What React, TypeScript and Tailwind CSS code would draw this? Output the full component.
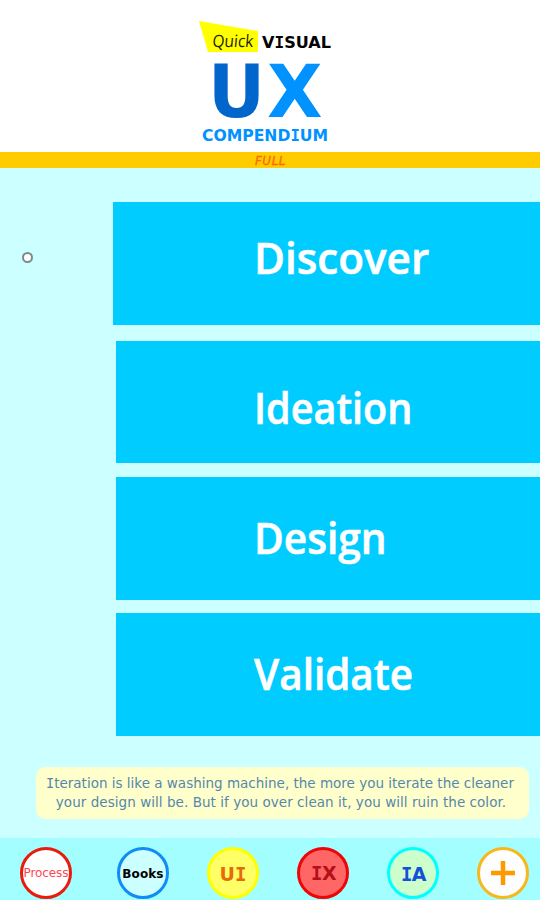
import { ReactNode } from 'react';
import clsx from 'clsx';

interface Stage {
  name: string;
  box: string;
  label: string;
}

const stages: Stage[] = [
  { name: 'Discover', box: 'ml-[112.5px] h-[123px] pl-[141.5px] pt-[25px]', label: 'text-[44px] scale-x-[0.96]' },
  { name: 'Ideation', box: 'ml-[116px] mt-[16px] h-[122px] pl-[138px] pt-[37px]', label: 'text-[43px] scale-x-[0.92]' },
  { name: 'Design', box: 'ml-[116px] mt-[14px] h-[123px] pl-[138px] pt-[31px]', label: 'text-[43px] scale-x-[0.945]' },
  { name: 'Validate', box: 'ml-[116px] mt-[13px] h-[123px] pl-[138px] pt-[31px]', label: 'text-[43px] scale-x-[0.94]' },
];

// Capital I with slabs, the sans face has a plain bar
const SlabI = () => <span className="font-['DejaVu_Sans_Mono',monospace]">I</span>;

const Logo = () => (
  <svg width="150" height="140" viewBox="190 10 150 140" className="font-['DejaVu_Sans',sans-serif]">
    <polygon points="199,21 258,31 258,52 208,52" fill="#ffff00" />
    <text transform="translate(212 47) skewX(-5)" fontSize="17" textLength="41" lengthAdjust="spacingAndGlyphs" fill="#222200" fontFamily="Open Sans, sans-serif">
      Quick
    </text>
    <text x="262" y="48" fontSize="16" fontWeight="700" textLength="69" lengthAdjust="spacingAndGlyphs" fill="#000">
      V<tspan fontFamily="DejaVu Sans Mono">I</tspan>SUAL
    </text>
    <text x="208" y="117" fontSize="73" fontWeight="700" textLength="57" lengthAdjust="spacingAndGlyphs" fill="#0066cc">
      U
    </text>
    <text x="267" y="117" fontSize="73" fontWeight="700" textLength="55.5" lengthAdjust="spacingAndGlyphs" fill="#0092ff">
      X
    </text>
    <text x="202" y="141" fontSize="16" fontWeight="700" textLength="126" lengthAdjust="spacingAndGlyphs" fill="#0092ff">
      COMPEND<tspan fontFamily="DejaVu Sans Mono">I</tspan>UM
    </text>
  </svg>
);

interface RoundButtonProps {
  className: string;
  children: ReactNode;
}

const RoundButton = ({ className, children }: RoundButtonProps) => (
  <button
    className={clsx(
      'flex h-[52px] w-[52px] shrink-0 items-center justify-center rounded-full border-[3px]',
      className
    )}
  >
    {children}
  </button>
);

const App = () => {
  return (
    <div className="flex h-[900px] w-[540px] flex-col overflow-hidden bg-[#ccffff] font-['DejaVu_Sans',sans-serif]">
      <header className="flex h-[152px] shrink-0 justify-center bg-white pr-[10px] pt-[10px]">
        <Logo />
      </header>
      <div className="flex h-[16px] shrink-0 items-center justify-center bg-[#ffcc00] pl-[1px] pt-[2px] text-[12px] italic leading-none text-[#ff6600]">
        <span className="tracking-[0.5px] [-webkit-text-stroke:0.3px_#ff6600]">FULL</span>
      </div>

      <main className="relative shrink-0 pt-[34px]">
        <span className="absolute left-[22px] top-[84px] h-[11px] w-[11px] rounded-full border-2 border-[#7f8a85] bg-white" />
        {stages.map((stage) => (
          <div key={stage.name} className={clsx('bg-[#00ccff]', stage.box)}>
            <h2
              className={clsx(
                "origin-left font-['Open_Sans',sans-serif] font-semibold leading-[60px] text-white [-webkit-text-stroke:0.6px_#fff]",
                stage.label
              )}
            >
              {stage.name}
            </h2>
          </div>
        ))}
      </main>

      <div className="ml-[36px] mt-[31px] h-[52px] w-[493px] shrink-0 rounded-[9px] bg-[#ffffcc] pt-[7px] text-center text-[13.5px] leading-[19px] text-[#5588aa]">
        <p className="-ml-[5px] whitespace-nowrap">
          <SlabI />teration is like a washing machine, the more you iterate the cleaner
        </p>
        <p className="-ml-[3px] whitespace-nowrap tracking-[0.05px]">
          your design will be. But if you over clean it, you will ruin the color.
        </p>
      </div>

      <nav className="mt-[19px] flex h-[62px] shrink-0 items-start bg-[#a3ffff] pl-[20px] pt-[9px]">
        <RoundButton className="mr-[45px] border-[#e81c0c] bg-white text-[12px] tracking-[-0.1px] text-[#ff4455]">
          Process
        </RoundButton>
        <RoundButton className="mr-[38px] border-[#118cf5] bg-[#ccffff] pt-[1px] text-[12px] font-bold tracking-[0.1px] text-black">
          Books
        </RoundButton>
        <RoundButton className="mr-[38px] border-[#ffff00] bg-[#ffff66] pt-[2px] text-[19px] font-bold text-[#e8690b]">
          U<SlabI />
        </RoundButton>
        <RoundButton className="mr-[38px] border-[#ee0505] bg-[#ff6666] pl-[1px] text-[19px] font-bold tracking-[-0.5px] text-[#b60f18]">
          <SlabI />X
        </RoundButton>
        <RoundButton className="mr-[38px] border-[#00ffff] bg-[#ccffcc] pl-[1px] pt-[2px] text-[19px] font-bold tracking-[-0.5px] text-[#1450d8]">
          <SlabI />A
        </RoundButton>
        <RoundButton className="border-[#f8b81c] bg-white">
          <svg width="24" height="24" viewBox="0 0 24 24" stroke="#ff9900" strokeWidth="4.5">
            <path d="M12 0V24M0 12H24" />
          </svg>
        </RoundButton>
      </nav>
    </div>
  );
};

export default App;
